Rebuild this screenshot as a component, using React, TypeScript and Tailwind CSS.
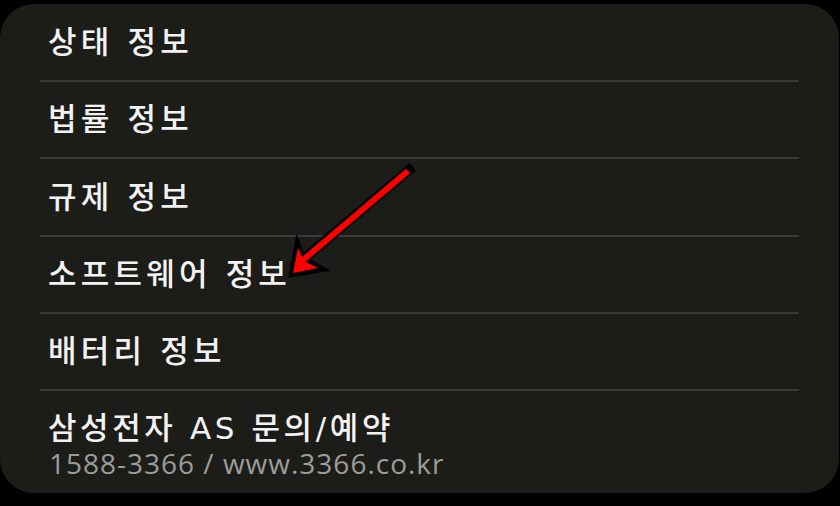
import React from "react";

const rows = ["상태 정보", "법률 정보", "규제 정보", "소프트웨어 정보", "배터리 정보"];
const titleFont = { fontFamily: '"DejaVu Sans", "Noto Sans CJK KR", sans-serif' };

export default function App() {
  return (
    <div className="relative w-[840px] h-[506px] bg-black pt-[4px] overflow-hidden" style={{ fontFamily: '"Open Sans", "Noto Sans CJK KR", sans-serif' }}>
      <div className="w-[839px] h-[489px] bg-[#1c1d19] rounded-[34px] px-[40px] flex flex-col">
        {rows.map((r, i) => (
          <React.Fragment key={r}>
            <div style={titleFont} className={`${i === 0 ? "h-[76px]" : "h-[75.3px]"} flex items-center pl-[8px] text-[31px] font-medium text-[#f2f2f2] tracking-[4.2px]`}>
              {r}
            </div>
            <div className="h-[2px] bg-[#3a3a38]" />
          </React.Fragment>
        ))}
        <div className="flex-1 flex flex-col justify-center pl-[8px] pt-[6px]">
          <div style={titleFont} className="text-[31px] font-medium text-[#f2f2f2] leading-[36px] tracking-[3.6px]">삼성전자 AS 문의/예약</div>
          <div className="text-[28px] text-[#9c9c9a] leading-[34px] tracking-[1px] pl-[1px]">1588-3366 / www.3366.co.kr</div>
        </div>
      </div>
      <svg className="absolute left-0 top-0" width="840" height="506" viewBox="0 0 840 506">
        <path d="M409 170 L300 262" stroke="#000" strokeWidth="10" strokeLinecap="square" />
        <path d="M290 276 L297 239 L304 257 L326 270 Z" fill="#000" stroke="#000" strokeWidth="3" strokeLinejoin="miter" />
        <path d="M408 171 L302 261" stroke="#ff0000" strokeWidth="6" />
        <path d="M293 273 L298 248 L304 261 L318 268 Z" fill="#ff0000" />
      </svg>
    </div>
  );
}
